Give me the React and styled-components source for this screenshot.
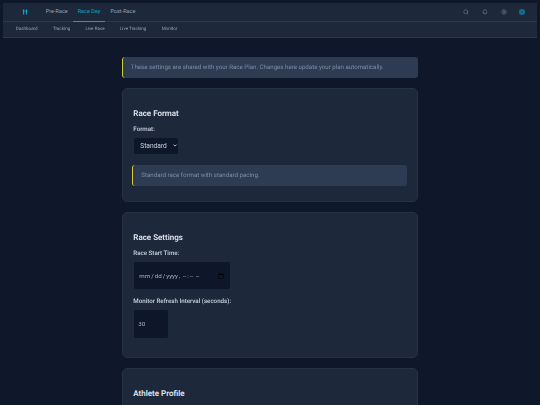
import styled, { createGlobalStyle } from "styled-components";
import { Search, Bell, Settings } from "lucide-react";

const GlobalStyle = createGlobalStyle`
  html, body {
    margin: 0;
    padding: 0;
    background: #0f172a;
    font-family: "Roboto", "Liberation Sans", sans-serif;
    text-rendering: geometricPrecision;
    overflow: hidden;
  }
  * { box-sizing: border-box; }
`;

// opacity keeps the small text greyscale, no coloured fringes
const Page = styled.div`
  height: 405px;
  overflow: hidden;
  padding: 3.3px 3.3px 0;
  opacity: 0.999;
`;

const Header = styled.header`
  background: #1e293b;
  border-bottom: 1px solid #2c3a50;
`;

const TopRow = styled.div`
  height: 19px;
  display: flex;
  align-items: stretch;
  border-bottom: 1px solid #2c3a50;
  padding-right: 11.5px;
`;

const Logo = styled.div`
  width: 37.5px;
  padding-left: 5px;
  display: flex;
  align-items: center;
  justify-content: center;
  color: #0ea5c6;
`;

const MainTabs = styled.nav`
  display: flex;
  flex: 1;
`;

const MainTab = styled.a`
  padding: 0 5px;
  display: flex;
  align-items: center;
  font-size: 5.5px;
  color: ${(p) => (p.$active ? "#0ea5c6" : "#94a3b8")};
  border-bottom: 1px solid ${(p) => (p.$active ? "#0ea5c6" : "transparent")};
  margin-bottom: -1px;
`;

const IconRow = styled.div`
  display: flex;
  align-items: center;
  gap: 12.6px;
`;

const IconBtn = styled.span`
  display: flex;
  color: #7c8a9e;
`;

const SubRow = styled.nav`
  height: 14.4px;
  display: flex;
  align-items: center;
  padding-left: 12.4px;
  gap: 15.2px;
`;

const SubTab = styled.a`
  font-size: 4.55px;
  color: #94a3b8;
`;

const Content = styled.main`
  width: 295.4px;
  margin: 19.3px 0 0 119px;
  display: flex;
  flex-direction: column;
  gap: 10px;
`;

const Note = styled.div`
  height: 21px;
  flex-shrink: 0;
  display: flex;
  align-items: center;
  padding-left: 7.5px;
  font-size: 6.15px;
  color: #7f8ea3;
  background: #2f3d54;
  border-left: 1.2px solid #d4cf3a;
  border-radius: 3px;
`;

const Card = styled.section`
  background: #1e293b;
  border: 1px solid #263347;
  border-radius: 5px;
  padding: 20px 10px 0;
  height: ${(p) => p.$height}px;
  flex-shrink: 0;
`;

const Title = styled.h2`
  margin: 0 0 7px;
  font-size: 8px;
  line-height: 10px;
  font-weight: 600;
  color: #e2e8f0;
`;

const Label = styled.label`
  display: block;
  font-size: 6.2px;
  line-height: 7px;
  font-weight: 500;
  color: #cbd5e1;
  margin-bottom: 4px;
`;

const Control = styled.input`
  display: block;
  background: #0f172a;
  border: 1px solid #1c2a3e;
  border-radius: 3px;
  color: #aab4c2;
  font-family: inherit;
  font-size: 6.2px;
  height: ${(p) => p.$h}px;
  width: ${(p) => p.$w}px;
  padding: 0 4px;
  margin: 0 0 ${(p) => p.$mb || 0}px;
  outline: none;
`;

const SelectWrap = styled.div`
  position: relative;
  width: 46px;
`;

const FormatSelect = styled.select`
  display: block;
  appearance: none;
  background: #0f172a;
  border: 1px solid #1c2a3e;
  border-radius: 3px;
  color: #cbd5e1;
  font-family: inherit;
  font-size: 6.6px;
  height: 18.5px;
  width: 46px;
  padding: 0 2px 0 6px;
  margin: 0;
  outline: none;
`;

const Chevron = styled.svg`
  position: absolute;
  right: 2px;
  top: 7.5px;
  pointer-events: none;
`;

const CardNote = styled(Note)`
  width: 275px;
  margin: 9.5px 0 0 -1px;
  padding-left: 8px;
`;

export default function App() {
  return (
    <Page>
      <GlobalStyle />
      <Header>
        <TopRow>
          <Logo>
            <svg width="6" height="6" viewBox="0 0 6 6" fill="currentColor">
              <rect x="1" y="0.5" width="1.2" height="5" />
              <rect x="3.8" y="0.5" width="1.2" height="5" />
              <rect x="0.4" y="1.6" width="2.4" height="0.8" />
              <rect x="3.2" y="1.6" width="2.4" height="0.8" />
            </svg>
          </Logo>
          <MainTabs>
            <MainTab>Pre-Race</MainTab>
            <MainTab $active>Race Day</MainTab>
            <MainTab>Post-Race</MainTab>
          </MainTabs>
          <IconRow>
            <IconBtn><Search size={6} /></IconBtn>
            <IconBtn><Bell size={6} /></IconBtn>
            <IconBtn><Settings size={6} /></IconBtn>
            <IconBtn>
              <svg width="6" height="6" viewBox="0 0 6 6">
                <circle cx="3" cy="3" r="3" fill="#0e7490" />
                <circle cx="3" cy="3" r="1.2" fill="#155e75" />
              </svg>
            </IconBtn>
          </IconRow>
        </TopRow>
        <SubRow>
          <SubTab>Dashboard</SubTab>
          <SubTab>Tracking</SubTab>
          <SubTab>Live Race</SubTab>
          <SubTab>Live Tracking</SubTab>
          <SubTab>Monitor</SubTab>
        </SubRow>
      </Header>
      <Content>
        <Note>These settings are shared with your Race Plan. Changes here update your plan automatically.</Note>
        <Card $height={114}>
          <Title>Race Format</Title>
          <Label>Format:</Label>
          <SelectWrap>
            <FormatSelect defaultValue="standard">
              <option value="standard">Standard</option>
            </FormatSelect>
            <Chevron width="4" height="3" viewBox="0 0 4 3" fill="none" stroke="#e2e8f0" strokeWidth="0.8">
              <path d="M0.5 0.6 L2 2.1 L3.5 0.6" />
            </Chevron>
          </SelectWrap>
          <CardNote>Standard race format with standard pacing.</CardNote>
        </Card>
        <Card $height={146}>
          <Title>Race Settings</Title>
          <Label>Race Start Time:</Label>
          <Control type="datetime-local" $w={98} $h={29.5} $mb={7.5} />
          <Label>Monitor Refresh Interval (seconds):</Label>
          <Control type="number" defaultValue={30} $w={36} $h={30} />
        </Card>
        <Card $height={60}>
          <Title>Athlete Profile</Title>
        </Card>
      </Content>
    </Page>
  );
}
